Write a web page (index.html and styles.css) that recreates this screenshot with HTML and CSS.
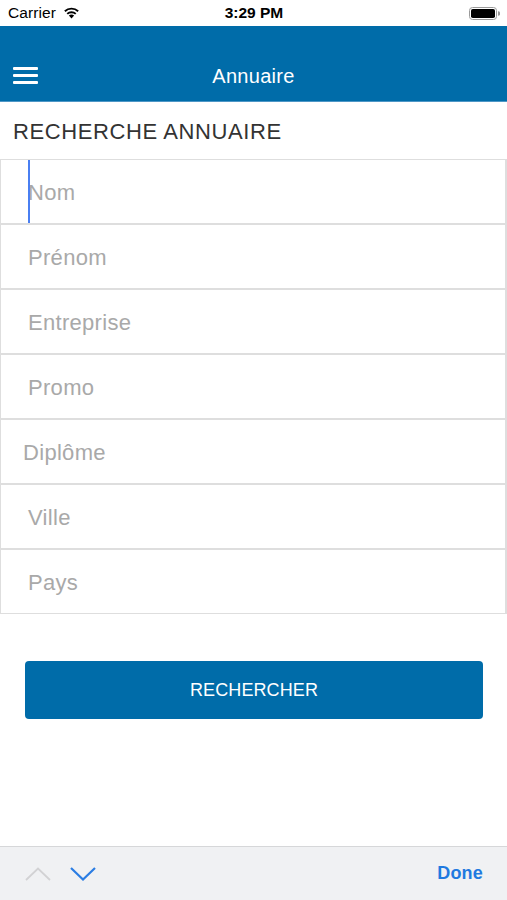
FILE: index.html
```html
<!DOCTYPE html>
<html lang="fr">
<head>
<meta charset="utf-8">
<title>Annuaire</title>
<link rel="stylesheet" href="styles.css">
</head>
<body>
<div class="screen">
  <div class="statusbar">
    <div class="sb-left">
      <span class="carrier">Carrier</span>
      <svg class="wifi" width="17" height="13" viewBox="0 0 17 13">
        <path d="M8.5 12.6 L5.9 9.6 A3.8 3.8 0 0 1 11.1 9.6 Z" fill="#000"/>
        <path d="M3.6 7.2 A7 7 0 0 1 13.4 7.2 L12.1 8.6 A5.2 5.2 0 0 0 4.9 8.6 Z" fill="#000"/>
        <path d="M1.2 4.6 A10.6 10.6 0 0 1 15.8 4.6 L14.5 6 A8.7 8.7 0 0 0 2.5 6 Z" fill="#000"/>
      </svg>
    </div>
    <div class="time">3:29 PM</div>
    <div class="sb-right">
      <svg class="battery" width="31" height="13" viewBox="0 0 31 13">
        <rect x="0.5" y="0.5" width="27" height="12" rx="3" fill="none" stroke="#9a9a9a"/>
        <rect x="2" y="2" width="24" height="9" rx="1.8" fill="#000"/>
        <path d="M29 4.3 a1.8 1.8 0 0 1 0 4.4 z" fill="#9a9a9a"/>
      </svg>
    </div>
  </div>

  <header class="navbar">
    <div class="menu-btn">
      <span></span><span></span><span></span>
    </div>
    <div class="nav-title">Annuaire</div>
  </header>

  <h1 class="section-title">RECHERCHE ANNUAIRE</h1>

  <form class="fields">
    <div class="field focused"><span class="cursor"></span><span class="ph">Nom</span></div>
    <div class="field"><span class="ph">Prénom</span></div>
    <div class="field"><span class="ph">Entreprise</span></div>
    <div class="field"><span class="ph">Promo</span></div>
    <div class="field field-narrow"><span class="ph">Diplôme</span></div>
    <div class="field"><span class="ph">Ville</span></div>
    <div class="field"><span class="ph">Pays</span></div>
  </form>

  <div class="actions">
    <button class="search-btn" type="button">RECHERCHER</button>
  </div>

  <div class="spacer"></div>

  <div class="kb-toolbar">
    <div class="arrows">
      <svg class="chev chev-up" width="26" height="14" viewBox="0 0 26 14">
        <path d="M1 13 L13 1.5 L25 13" fill="none" stroke="#d2d2d4" stroke-width="1.8"/>
      </svg>
      <svg class="chev chev-down" width="26" height="14" viewBox="0 0 26 14">
        <path d="M1 1 L13 12.5 L25 1" fill="none" stroke="#2b7de3" stroke-width="2.2"/>
      </svg>
    </div>
    <div class="done">Done</div>
  </div>
</div>
</body>
</html>
```

FILE: styles.css
```css
* { box-sizing: border-box; }

html, body {
  margin: 0;
  padding: 0;
  background: #fff;
}

body {
  font-family: "Liberation Sans", Arial, sans-serif;
}

.screen {
  width: 507px;
  height: 900px;
  display: flex;
  flex-direction: column;
  overflow: hidden;
}

/* status bar */
.statusbar {
  height: 26px;
  display: grid;
  grid-template-columns: 1fr auto 1fr;
  align-items: center;
  padding: 0 7px 0 8px;
  color: #000;
}
.sb-left {
  display: flex;
  align-items: center;
  gap: 7px;
}
.carrier {
  font-size: 15.5px;
  letter-spacing: 0.1px;
}
.wifi { margin-top: -1px; }
.time {
  font-size: 15.5px;
  font-weight: bold;
  text-align: center;
}
.sb-right {
  display: flex;
  justify-content: flex-end;
}

/* nav bar */
.navbar {
  height: 76px;
  background: #006ca9;
  display: flex;
  align-items: center;
  padding-top: 24px;
  border-bottom: 1px solid #4e97c6;
}
.menu-btn {
  width: 51px;
  padding-left: 13px;
  display: flex;
  flex-direction: column;
  gap: 4.5px;
}
.menu-btn span {
  display: block;
  width: 25px;
  height: 2.5px;
  background: #fff;
  border-radius: 1px;
}
.nav-title {
  flex: 1;
  text-align: center;
  color: #fff;
  font-size: 20px;
  letter-spacing: 0.3px;
  margin-right: 51px;
  margin-top: 1px;
}

/* section title */
.section-title {
  margin: 0;
  height: 57px;
  display: flex;
  align-items: center;
  padding-left: 13px;
  padding-top: 2px;
  font-size: 22px;
  font-weight: normal;
  letter-spacing: 0.6px;
  color: #333;
}

/* fields */
.fields {
  display: flex;
  flex-direction: column;
  margin: 0;
}
.field {
  position: relative;
  height: 65px;
  border: 1px solid #dedede;
  border-right-width: 2px;
  display: flex;
  align-items: center;
  padding-left: 27px;
  padding-top: 3px;
}
.field-narrow { padding-left: 22px; }
.ph {
  font-size: 22px;
  letter-spacing: 0.3px;
  color: #a9a9a9;
}
.cursor {
  position: absolute;
  left: 27px;
  top: 0;
  width: 2px;
  height: 63px;
  background: #4a7ff2;
}

/* button */
.actions {
  padding: 47px 24px 0 25px;
}
.search-btn {
  width: 100%;
  height: 58px;
  border: 0;
  border-radius: 4px;
  background: #006ca9;
  color: #fff;
  font-family: "Liberation Sans", Arial, sans-serif;
  font-size: 18px;
  letter-spacing: 0.1px;
  padding: 0;
}

.spacer { flex: 1; }

/* keyboard toolbar */
.kb-toolbar {
  height: 54px;
  background: #f0f1f3;
  border-top: 1px solid #d6d7d9;
  display: flex;
  align-items: center;
  justify-content: space-between;
  padding: 0 24px 0 25px;
}
.arrows {
  display: flex;
  align-items: center;
  gap: 19px;
}
.done {
  color: #1f7ae0;
  font-size: 18px;
  font-weight: bold;
  letter-spacing: 0.2px;
}
```
